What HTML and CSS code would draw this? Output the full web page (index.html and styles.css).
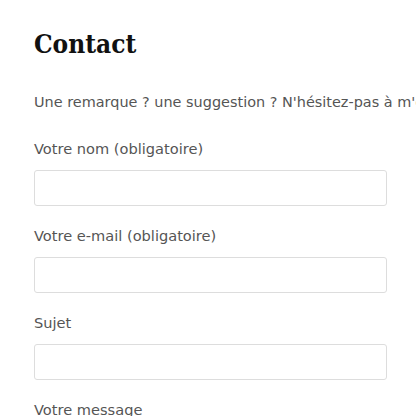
FILE: index.html
```html
<!DOCTYPE html>
<html lang="fr">
<head>
<meta charset="utf-8">
<link rel="stylesheet" href="styles.css">
</head>
<body>
<main class="page">
  <h1 class="title">Contact</h1>
  <p class="intro">Une remarque ? une suggestion ? N'hésitez-pas à m'écrire !</p>
  <form class="form">
    <label class="field"><span class="label">Votre nom (obligatoire)</span><input class="input" type="text"></label>
    <label class="field"><span class="label">Votre e-mail (obligatoire)</span><input class="input" type="text"></label>
    <label class="field"><span class="label">Sujet</span><input class="input" type="text"></label>
    <label class="field"><span class="label">Votre message</span><textarea class="input area"></textarea></label>
  </form>
</main>
</body>
</html>
```
FILE: styles.css
```css
html, body { margin: 0; padding: 0; background: #fff; overflow: hidden; height: 416px; }
.page { padding: 24px 0 0 34px; width: 416px; box-sizing: border-box; overflow: hidden; height: 416px; }
.title {
  font-family: "DejaVu Serif Condensed", "DejaVu Serif", serif;
  font-weight: bold;
  font-size: 26px;
  line-height: 40px;
  margin: 0 0 26px;
  color: #111;
}
.intro {
  font-family: "DejaVu Sans", sans-serif;
  font-size: 14.45px;
  color: #555;
  margin: 0 0 23px;
  white-space: nowrap;
  line-height: 24px;
}
.form { display: flex; flex-direction: column; gap: 18px; }
.field { display: flex; flex-direction: column; gap: 9px; }
.label { font-family: "DejaVu Sans", sans-serif; font-size: 14.6px; color: #555; line-height: 24px; }
.input {
  box-sizing: border-box;
  width: 353px;
  height: 36px;
  border: 1px solid #ddd;
  border-radius: 3px;
  background: #fff;
  margin: 0;
}
.area { height: 120px; resize: none; }
```
